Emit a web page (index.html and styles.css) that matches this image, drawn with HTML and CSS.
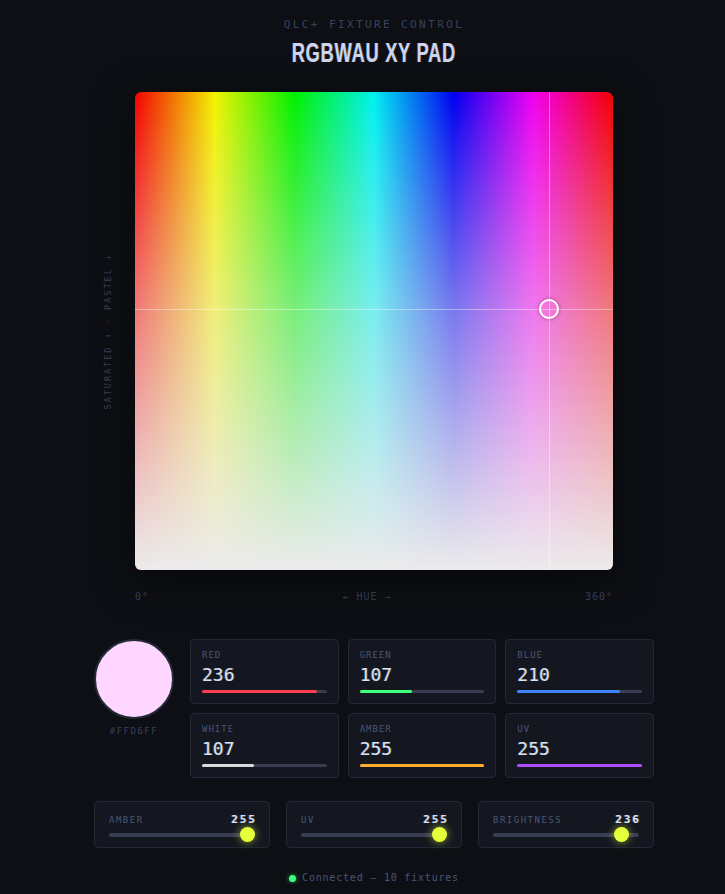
FILE: index.html
```html
<!DOCTYPE html>
<html lang="en">
<head>
  <meta charset="UTF-8" />
  <meta name="viewport" content="width=device-width, initial-scale=1.0" />
  <title>RGBWAU XY Pad</title>
  <link rel="stylesheet" href="styles.css">
</head>
<body>
  <main class="page">
    <header class="head">
      <div class="subtitle">QLC+ FIXTURE CONTROL</div>
      <h1 class="title"><span>RGBWAU XY PAD</span></h1>
    </header>

    <section class="pad-row">
      <div class="axis-y">SATURATED ↑ · PASTEL ↓</div>
      <div class="pad" id="pad">
        <div class="pad-sat"></div>
        <div class="cross-v" style="left: 414px"></div>
        <div class="cross-h" style="top: 217px"></div>
        <div class="marker" style="left: 414px; top: 217px"></div>
      </div>
    </section>

    <div class="axis-x">
      <span>0°</span>
      <span>← HUE →</span>
      <span>360°</span>
    </div>

    <section class="mix">
      <div class="swatch-col">
        <div class="swatch"></div>
        <div class="swatch-hex">#FFD6FF</div>
      </div>

      <div class="channels">
        <div class="chan">
          <div class="chan-label">RED</div>
          <div class="chan-value">236</div>
          <div class="bar"><div class="fill red" style="width: 92.5%"></div></div>
        </div>
        <div class="chan">
          <div class="chan-label">GREEN</div>
          <div class="chan-value">107</div>
          <div class="bar"><div class="fill green" style="width: 42%"></div></div>
        </div>
        <div class="chan">
          <div class="chan-label">BLUE</div>
          <div class="chan-value">210</div>
          <div class="bar"><div class="fill blue" style="width: 82.4%"></div></div>
        </div>
        <div class="chan">
          <div class="chan-label">WHITE</div>
          <div class="chan-value">107</div>
          <div class="bar"><div class="fill white" style="width: 42%"></div></div>
        </div>
        <div class="chan">
          <div class="chan-label">AMBER</div>
          <div class="chan-value">255</div>
          <div class="bar"><div class="fill amber" style="width: 100%"></div></div>
        </div>
        <div class="chan">
          <div class="chan-label">UV</div>
          <div class="chan-value">255</div>
          <div class="bar"><div class="fill uv" style="width: 100%"></div></div>
        </div>
      </div>
    </section>

    <section class="sliders">
      <div class="slider">
        <div class="slider-head"><span>AMBER</span><b>255</b></div>
        <input type="range" min="0" max="255" value="255">
      </div>
      <div class="slider">
        <div class="slider-head"><span>UV</span><b>255</b></div>
        <input type="range" min="0" max="255" value="255">
      </div>
      <div class="slider">
        <div class="slider-head"><span>BRIGHTNESS</span><b>236</b></div>
        <input type="range" min="0" max="255" value="236">
      </div>
    </section>

    <footer class="status">
      <span class="dot"></span>
      Connected — 10 fixtures
    </footer>
  </main>
</body>
</html>
```

FILE: styles.css
```css
:root {
  --bg: #0d0f14;
  --card: #141720;
  --border: #232837;
  --muted: #4a5674;
  --dim: #38425c;
  --text: #dbe3f4;
  --track: #383d52;
  --mono: 'DejaVu Sans Mono', 'Liberation Mono', monospace;
  --sans: 'Liberation Sans', 'DejaVu Sans', sans-serif;
}

* {
  box-sizing: border-box;
}

body {
  margin: 0;
  padding-left: 23px;
  background-color: var(--bg);
  color: var(--text);
  font-family: var(--mono);
}

.page {
  width: 560px;
  margin: 0 auto;
}

.head {
  padding-top: 18px;
  text-align: center;
}

.subtitle {
  font-size: 11px;
  line-height: 14px;
  letter-spacing: 2.4px;
  color: var(--dim);
}

.title {
  margin: 6px 0 0;
  font-family: var(--sans);
  font-size: 27px;
  line-height: 30px;
  font-weight: bold;
  letter-spacing: 1px;
  color: #cdd6ee;
  text-shadow: -1px 0 rgba(80, 140, 255, 0.35), 1px 0 rgba(255, 170, 60, 0.3);
}

/* the original face is a tall condensed one, squeeze the fallback */
.title span {
  display: inline-block;
  transform: scaleX(0.68);
}

.pad-row {
  margin-top: 24px;
  display: grid;
  grid-template-columns: 41px 478px 41px;
  align-items: center;
}

.axis-y {
  justify-self: start;
  margin-left: 9px;
  writing-mode: vertical-rl;
  transform: rotate(180deg);
  font-size: 8.5px;
  letter-spacing: 2px;
  color: var(--dim);
}

.pad {
  position: relative;
  width: 478px;
  height: 478px;
  border-radius: 6px;
  overflow: hidden;
  background: linear-gradient(to right, #f20000 0%, #f2f200 16.67%, #00f000 33.33%, #00f0f0 50%, #0000f0 66.67%, #f000f0 83.33%, #f20000 100%);
  box-shadow: 0 10px 40px rgba(0, 0, 0, 0.5);
}

.pad-sat {
  position: absolute;
  inset: 0;
  background: linear-gradient(to bottom, rgba(238, 236, 238, 0) 0%, rgba(238, 236, 238, 0.5) 45%, rgba(236, 235, 236, 1) 100%);
}

.cross-v {
  position: absolute;
  top: 0;
  bottom: 0;
  width: 1px;
  background: rgba(255, 255, 255, 0.4);
}

.cross-h {
  position: absolute;
  left: 0;
  right: 0;
  height: 1px;
  background: rgba(255, 255, 255, 0.4);
}

.marker {
  position: absolute;
  width: 20px;
  height: 20px;
  margin: -10px 0 0 -10px;
  border: 2px solid #fff;
  border-radius: 50%;
  box-shadow: 0 0 4px rgba(0, 0, 0, 0.35);
}

.axis-x {
  margin: 21px 41px 0;
  display: flex;
  justify-content: space-between;
  font-size: 10px;
  line-height: 12px;
  letter-spacing: 1px;
  color: var(--dim);
}

.mix {
  margin-top: 36px;
  display: flex;
  gap: 16px;
}

.swatch-col {
  width: 80px;
  display: flex;
  flex-direction: column;
  align-items: center;
}

.swatch {
  width: 80px;
  height: 80px;
  border-radius: 50%;
  background-color: #ffd6ff;
  border: 2px solid #262b3a;
}

.swatch-hex {
  margin-top: 7px;
  font-size: 9px;
  letter-spacing: 1.5px;
  color: var(--dim);
}

.channels {
  flex: 1;
  display: grid;
  grid-template-columns: repeat(3, 1fr);
  gap: 9px;
}

.chan {
  background-color: var(--card);
  border: 1px solid var(--border);
  border-radius: 4px;
  padding: 10px 11px 10px;
}

.chan-label {
  font-size: 9px;
  line-height: 10px;
  letter-spacing: 1px;
  color: var(--muted);
}

.chan-value {
  margin-top: 4px;
  font-size: 18px;
  line-height: 22px;
  color: var(--text);
  text-shadow: -1px 0 rgba(80, 140, 255, 0.3), 1px 0 rgba(255, 170, 60, 0.25);
}

.bar {
  margin-top: 4px;
  height: 3px;
  background-color: var(--track);
  border-radius: 2px;
}

.fill {
  height: 100%;
  border-radius: 2px;
}

.red { background-color: #ff3d50; }
.green { background-color: #3dff7c; }
.blue { background-color: #3d84ff; }
.white { background-color: #d9d9d9; }
.amber { background-color: #ffab2e; }
.uv { background-color: #b04cff; }

.sliders {
  margin-top: 23px;
  display: grid;
  grid-template-columns: repeat(3, 1fr);
  gap: 16px;
}

.slider {
  background-color: var(--card);
  border: 1px solid var(--border);
  border-radius: 4px;
  padding: 13px 14px 5px;
}

.slider-head {
  display: flex;
  justify-content: space-between;
  font-size: 9px;
  line-height: 10px;
  letter-spacing: 1.5px;
  color: var(--muted);
}

.slider-head b {
  font-size: 11px;
  letter-spacing: 2px;
  margin-right: -2px;
  color: var(--text);
  text-shadow: -1px 0 rgba(80, 140, 255, 0.35), 1px 0 rgba(255, 170, 60, 0.3);
}

input[type="range"] {
  -webkit-appearance: none;
  appearance: none;
  display: block;
  width: 100%;
  height: 15px;
  margin: 2px 0 0;
  background: transparent;
}

input[type="range"]::-webkit-slider-runnable-track {
  height: 4px;
  border-radius: 2px;
  background-color: var(--track);
}

input[type="range"]::-webkit-slider-thumb {
  -webkit-appearance: none;
  width: 15px;
  height: 15px;
  margin-top: -5.5px;
  border-radius: 50%;
  background-color: #e5ff3a;
  box-shadow: 0 0 8px rgba(229, 255, 58, 0.6);
}

.status {
  margin: 24px 0 0;
  display: flex;
  justify-content: center;
  align-items: center;
  gap: 6px;
  font-size: 10px;
  line-height: 12px;
  letter-spacing: 0.8px;
  color: var(--muted);
}

.dot {
  width: 7px;
  height: 7px;
  border-radius: 50%;
  background-color: #3dff7c;
  box-shadow: 0 0 5px rgba(61, 255, 124, 0.6);
}
```
